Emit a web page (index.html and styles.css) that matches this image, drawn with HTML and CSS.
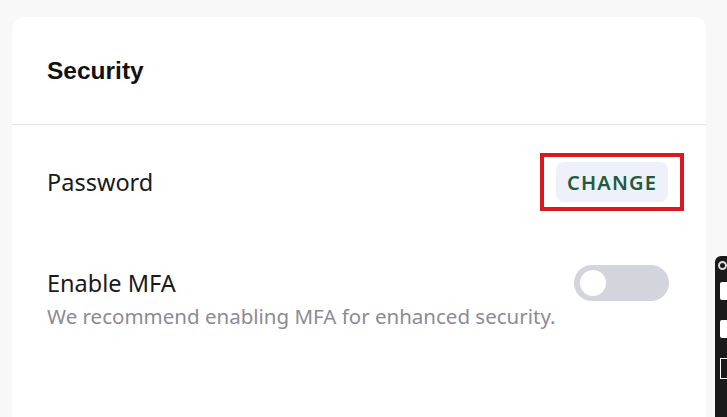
FILE: index.html
```html
<!DOCTYPE html>
<html lang="en">
<head>
    <meta charset="UTF-8">
    <meta name="viewport" content="width=device-width, initial-scale=1.0">
    <title>Security</title>
    <link rel="stylesheet" href="styles.css">
</head>
<body>
    <section class="card">
        <header class="card-head">
            <h2>Security</h2>
        </header>

        <div class="row">
            <div class="label">Password</div>
            <div class="highlight">
                <button class="btn-change">CHANGE</button>
            </div>
        </div>

        <div class="row row-mfa">
            <div>
                <div class="label">Enable MFA</div>
                <div class="hint">We recommend enabling MFA for enhanced security.</div>
            </div>
            <div class="toggle"><span class="knob"></span></div>
        </div>
    </section>

    <div class="sidebar-widget">
        <span class="w-icon"></span>
        <span class="w-box"></span>
        <span class="w-box"></span>
        <span class="w-box outline"></span>
    </div>
</body>
</html>
```

FILE: styles.css
```css
body {
    margin: 0;
    background-color: #f8f8f8;
    font-family: "Noto Sans", "Open Sans", sans-serif;
    height: 417px;
    overflow: hidden;
}

.card {
    background-color: white;
    margin: 17px 21px 0 12px;
    border-radius: 12px 12px 0 0;
    height: 400px;
}

.card-head {
    height: 107px;
    border-bottom: 1px solid #e4e4e7;
    display: flex;
    align-items: center;
    padding: 0 35px;
}

.card-head h2 {
    margin: 0;
    font-family: "Liberation Sans", Arial, sans-serif;
    font-size: 24.5px;
    font-weight: bold;
    color: #111;
}

.row {
    display: flex;
    justify-content: space-between;
    align-items: center;
    padding: 0 22px 0 35px;
}

.row:nth-of-type(1) {
    margin-top: 28px;
}

.label {
    font-size: 23.5px;
    color: #1a1a1a;
}

.highlight {
    border: 4px solid #d9191f;
    padding: 5px 12px;
}

.btn-change {
    background-color: #eef1f9;
    border: none;
    border-radius: 8px;
    color: #1e5c3f;
    font-family: "Noto Sans", sans-serif;
    font-size: 20px;
    font-weight: 600;
    letter-spacing: 1.2px;
    width: 112px;
    height: 40px;
    padding: 0;
    cursor: pointer;
}

.row-mfa {
    margin-top: 56px;
    padding-right: 37px;
    align-items: flex-start;
}

.hint {
    font-size: 20.5px;
    color: #8b8b95;
    margin-top: 3px;
}

.toggle {
    width: 95px;
    height: 36px;
    border-radius: 18px;
    background-color: #d2d6dc;
    display: flex;
    align-items: center;
    padding-left: 6px;
    box-sizing: border-box;
    margin-top: -2px;
}

.knob {
    width: 26px;
    height: 26px;
    border-radius: 50%;
    background-color: white;
}

.sidebar-widget {
    position: absolute;
    right: 0;
    top: 256px;
    width: 12px;
    height: 161px;
    background-color: #1a1a1a;
    border-radius: 6px 0 0 0;
    display: flex;
    flex-direction: column;
    align-items: flex-end;
    padding-top: 5px;
    box-sizing: border-box;
}

.w-icon {
    width: 5px;
    height: 5px;
    border: 2px solid #ddd;
    border-radius: 50%;
    margin-bottom: 12px;
}

.w-box {
    width: 7px;
    height: 18px;
    background-color: white;
    border-radius: 2px 0 0 2px;
    margin-bottom: 20px;
}

.w-box.outline {
    background-color: transparent;
    border: 1px solid white;
    border-right: none;
    width: 6px;
    height: 19px;
    border-radius: 0;
}
```
